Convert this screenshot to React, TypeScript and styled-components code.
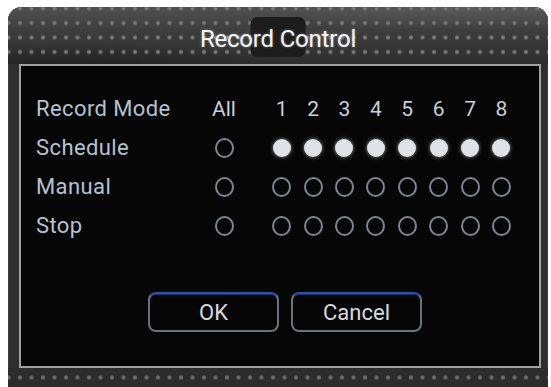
import styled, { createGlobalStyle } from 'styled-components';

const GlobalStyle = createGlobalStyle`
  html, body {
    margin: 0;
    padding: 0;
    background: #ffffff;
    overflow: hidden;
  }
  body {
    font-family: Roboto, "Liberation Sans", sans-serif;
  }
`;

const Frame = styled.div`
  margin: 7px 0 0 8px;
  width: 540px;
  height: 396px;
  border-radius: 14px 14px 0 0;
  background: #2f2f2f;
  box-shadow: inset 0 0 0 1px #3c3c3c;
  display: flex;
  flex-direction: column;
  overflow: hidden;
`;

const TitleBar = styled.div`
  height: 57px;
  display: flex;
  align-items: center;
  justify-content: center;
  background:
    radial-gradient(circle, #858585 0, #6e6e6e 1.6px, transparent 2.6px) 6.25px 8.75px / 11.5px 14.5px,
    radial-gradient(ellipse 60% 70% at 12% 110%, rgba(20, 20, 20, 0.55), transparent 70%),
    radial-gradient(ellipse 55% 60% at 85% 0%, rgba(120, 120, 120, 0.25), transparent 70%),
    linear-gradient(#505050, #3c3c3c 45%, #2e2e2e);
`;

const Title = styled.div`
  position: relative;
  z-index: 0;
  font-size: 24px;
  color: #f4f4f4;
  letter-spacing: -0.2px;
  text-shadow: 0 0 3px rgba(255, 255, 255, 0.35);
  margin-top: 7px;

  &::before {
    content: '';
    position: absolute;
    left: 50%;
    top: -8px;
    width: 55px;
    height: 40px;
    transform: translateX(-50%);
    background: #1c1c1c;
    border-radius: 7px;
    z-index: -1;
  }
`;

const Panel = styled.div`
  margin: 0 7px 0 11px;
  height: 300px;
  border: 2px solid #a0a0a0;
  background: #060606;
  display: flex;
  flex-direction: column;
`;

const Grid = styled.div`
  display: grid;
  grid-template-columns: 183px 40px 22px repeat(8, 31.4px);
  grid-auto-rows: 39px;
  padding-top: 23px;
  align-items: center;
`;

const Label = styled.div`
  padding-left: 15px;
  font-size: 22px;
  letter-spacing: 0.4px;
  color: #b6c2d0;
`;

const Head = styled.div<{ col: number }>`
  grid-column: ${(p) => p.col};
  justify-self: center;
  font-size: 21px;
  color: #c9cfd6;
`;

const Radio = styled.div<{ col: number; on?: boolean }>`
  grid-column: ${(p) => p.col};
  justify-self: center;
  box-sizing: border-box;
  width: ${(p) => (p.on ? 18 : 19)}px;
  height: ${(p) => (p.on ? 18 : 20)}px;
  border-radius: 50%;
  border: ${(p) => (p.on ? 'none' : '2px solid #7c8696')};
  background: ${(p) => (p.on ? '#dfe3e8' : 'transparent')};
  box-shadow: ${(p) => (p.on ? '0 0 4px rgba(220, 226, 235, 0.6)' : 'none')};
`;

const Buttons = styled.div`
  display: flex;
  gap: 12px;
  padding-left: 127px;
  margin-top: 47px;
`;

const Button = styled.div`
  box-sizing: border-box;
  width: 131px;
  height: 40px;
  border-radius: 8px;
  border: 2px solid #6a7280;
  border-top-color: #2f52a8;
  box-shadow: inset 0 1px 0 #1d3270;
  display: flex;
  align-items: center;
  justify-content: center;
  font-size: 22px;
  color: #d6dade;
`;

const BottomStrip = styled.div`
  flex: 1;
  background:
    radial-gradient(circle, #767676 0, #626262 1.6px, transparent 2.6px) 6.25px 2px / 11.5px 14.5px repeat-x,
    #2c2c2c;
`;

const modes = ['Schedule', 'Manual', 'Stop'];
const channels = [1, 2, 3, 4, 5, 6, 7, 8];

export default function App() {
  return (
    <>
      <GlobalStyle />
      <Frame>
        <TitleBar>
          <Title>Record Control</Title>
        </TitleBar>
        <Panel>
          <Grid>
            <Label>Record Mode</Label>
            <Head col={2}>All</Head>
            {channels.map((c) => (
              <Head key={c} col={c + 3}>{c}</Head>
            ))}
            {modes.map((m) => (
              <>
                <Label key={m}>{m}</Label>
                <Radio col={2} />
                {channels.map((c) => (
                  <Radio key={m + c} col={c + 3} on={m === 'Schedule'} />
                ))}
              </>
            ))}
          </Grid>
          <Buttons>
            <Button>OK</Button>
            <Button>Cancel</Button>
          </Buttons>
        </Panel>
        <BottomStrip />
      </Frame>
    </>
  );
}
